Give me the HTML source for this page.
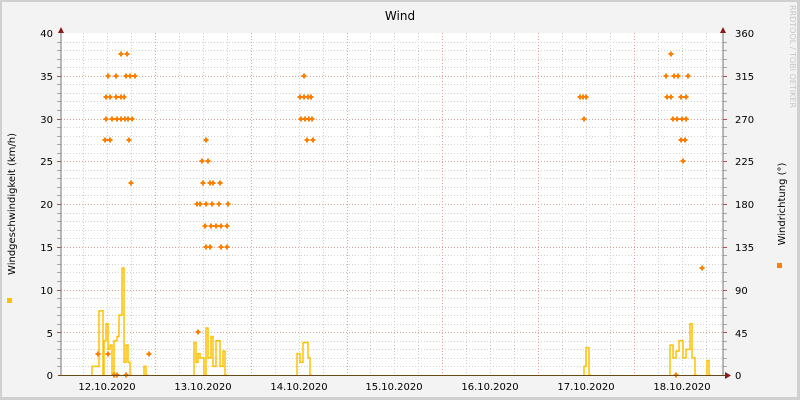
<!DOCTYPE html>
<html><head><meta charset="utf-8"><style>
html,body{margin:0;padding:0;width:800px;height:400px;overflow:hidden;background:#f3f3f3}
svg{display:block}
text{font-family:"DejaVu Sans","Liberation Sans",sans-serif;font-size:10px;fill:#000}
</style></head><body>
<svg id="s" width="800" height="400" xmlns="http://www.w3.org/2000/svg">
<rect x="0" y="0" width="800" height="400" fill="#d0d0d0"/>
<rect x="2" y="2" width="795" height="395" fill="#f3f3f3"/>
<rect x="61" y="33" width="662" height="342" fill="#ffffff"/>
<g id="grid"></g>
<g id="data"></g>
<line x1="61" y1="30" x2="61" y2="376" stroke="#777" stroke-width="1"/>
<line x1="723" y1="30" x2="723" y2="376" stroke="#777" stroke-width="1"/>
<line x1="58" y1="375.5" x2="728" y2="375.5" stroke="#6b4a1a" stroke-width="1"/>
<polygon points="58,33 64,33 61,27" fill="#8b1a1a"/>
<polygon points="720,33 726,33 723,27" fill="#8b1a1a"/>
<polygon points="725,372 725,379 731,375.5" fill="#8b1a1a"/>
<text x="400" y="20" text-anchor="middle" font-size="12" style="font-size:12px">Wind</text>
<g text-anchor="end">
<text x="53" y="37">40</text><text x="53" y="80">35</text><text x="53" y="123">30</text><text x="53" y="165">25</text>
<text x="53" y="208">20</text><text x="53" y="251">15</text><text x="53" y="294">10</text><text x="53" y="337">5</text><text x="53" y="379">0</text>
</g>
<g text-anchor="start">
<text x="735" y="37">360</text><text x="735" y="80">315</text><text x="735" y="123">270</text><text x="735" y="165">225</text>
<text x="735" y="208">180</text><text x="735" y="251">135</text><text x="735" y="294">90</text><text x="735" y="337">45</text><text x="735" y="379">0</text>
</g>
<g text-anchor="middle">
<text x="107" y="390">12.10.2020</text><text x="203" y="390">13.10.2020</text><text x="299" y="390">14.10.2020</text>
<text x="394" y="390">15.10.2020</text><text x="490" y="390">16.10.2020</text><text x="586" y="390">17.10.2020</text><text x="682" y="390">18.10.2020</text>
</g>
<text transform="translate(15,204) rotate(-90)" text-anchor="middle">Windgeschwindigkeit (km/h)</text>
<text transform="translate(785,204) rotate(-90)" text-anchor="middle">Windrichtung (°)</text>
<text transform="translate(790,5) rotate(90)" style="font-size:8px;fill:#c8c8c8">RRDTOOL / TOBI OETIKER</text>
<rect x="7" y="298" width="5" height="5" fill="#ffc000"/>
<rect x="777" y="263" width="5" height="5" fill="#ff8000"/>
</svg>
<script>
var ns="http://www.w3.org/2000/svg",g=document.getElementById("grid"),d=document.getElementById("data");
function el(p,t,a){var e=document.createElementNS(ns,t);for(var k in a)e.setAttribute(k,a[k]);p.appendChild(e);return e}
for(var v=1;v<40;v++){var y=375-v*8.55;y=Math.round(y)+0.5;var maj=v%5==0;
el(g,"line",{x1:61,x2:723,y1:y,y2:y,stroke:maj?"#e2a0a0":"#cfcfcf","stroke-dasharray":"1,2"});
el(g,"line",{x1:57,x2:61,y1:y,y2:y,stroke:maj?"#b05050":"#aaa"});el(g,"line",{x1:723,x2:727,y1:y,y2:y,stroke:maj?"#b05050":"#aaa"});}
for(var h=-42;h<=156;h+=6){var x=107+h*95.8/24;if(x<62||x>722)continue;x=Math.round(x)+0.5;var maj=((h%24)+24)%24==12;
el(g,"line",{x1:x,x2:x,y1:33,y2:375,stroke:maj?"#e2a0a0":"#cfcfcf","stroke-dasharray":"1,2"});}
function Y(v){return (375-v*8.55).toFixed(1)}
var steps=[
[[92,1],[96,1],[99,7.5],[103,0],[104,4],[106,6],[108,3],[110,3.5],[112,0],[114,4],[117,4.5],[119,7],[122,12.5],[124,1.5],[126,3.5],[128,1.5],[130,0]],
[[144,1],[146,0]],
[[194,3.8],[196,1.5],[198,2.5],[200,2],[204,0],[206,5.5],[208,2],[211,4.5],[213,1],[216,4],[220,1],[223,2.8],[225,0]],
[[297,2.5],[300,1.5],[303,3.8],[306,3.8],[308,2],[310,0]],
[[584,1],[586,3.2],[589,0]],
[[670,3.5],[673,2],[676,2.8],[679,4],[683,2],[686,3],[690,6],[692,2],[695,0]],
[[707,1.7],[709,0]]];
steps.forEach(function(s){var p="M"+s[0][0]+" 375";s.forEach(function(q,i){p+=" V"+Y(q[1])+" H"+(i+1<s.length?s[i+1][0]:q[0]+2);});p+=" V375";
el(d,"path",{d:p,fill:"none",stroke:"#ffc000","stroke-width":1.5});});
var dots={54:[121,127,671],76:[108,116,126,130,135,304,666,674,678,688],97:[106,110,116,121,124,300,304,308,311,580,583,586,667,671,681,686],
119:[106,112,117,121,125,128,132,301,305,309,312,584,673,677,682,686],140:[105,110,129,206,307,313,681,685],161:[202,208,683],
183:[131,203,210,213,220],204:[197,200,206,212,219,228],226:[205,211,216,221,227],247:[206,210,221,227],268:[702],332:[198],354:[98,108,149],375:[114,117,126,676]};
for(var y in dots)dots[y].forEach(function(x){el(d,"path",{d:"M"+(x-2.5)+" "+y+" H"+(x+2.5)+" M"+x+" "+(y-2.5)+" V"+(+y+2.5),stroke:"#ff8000","stroke-width":2});});
</script>
</body></html>
